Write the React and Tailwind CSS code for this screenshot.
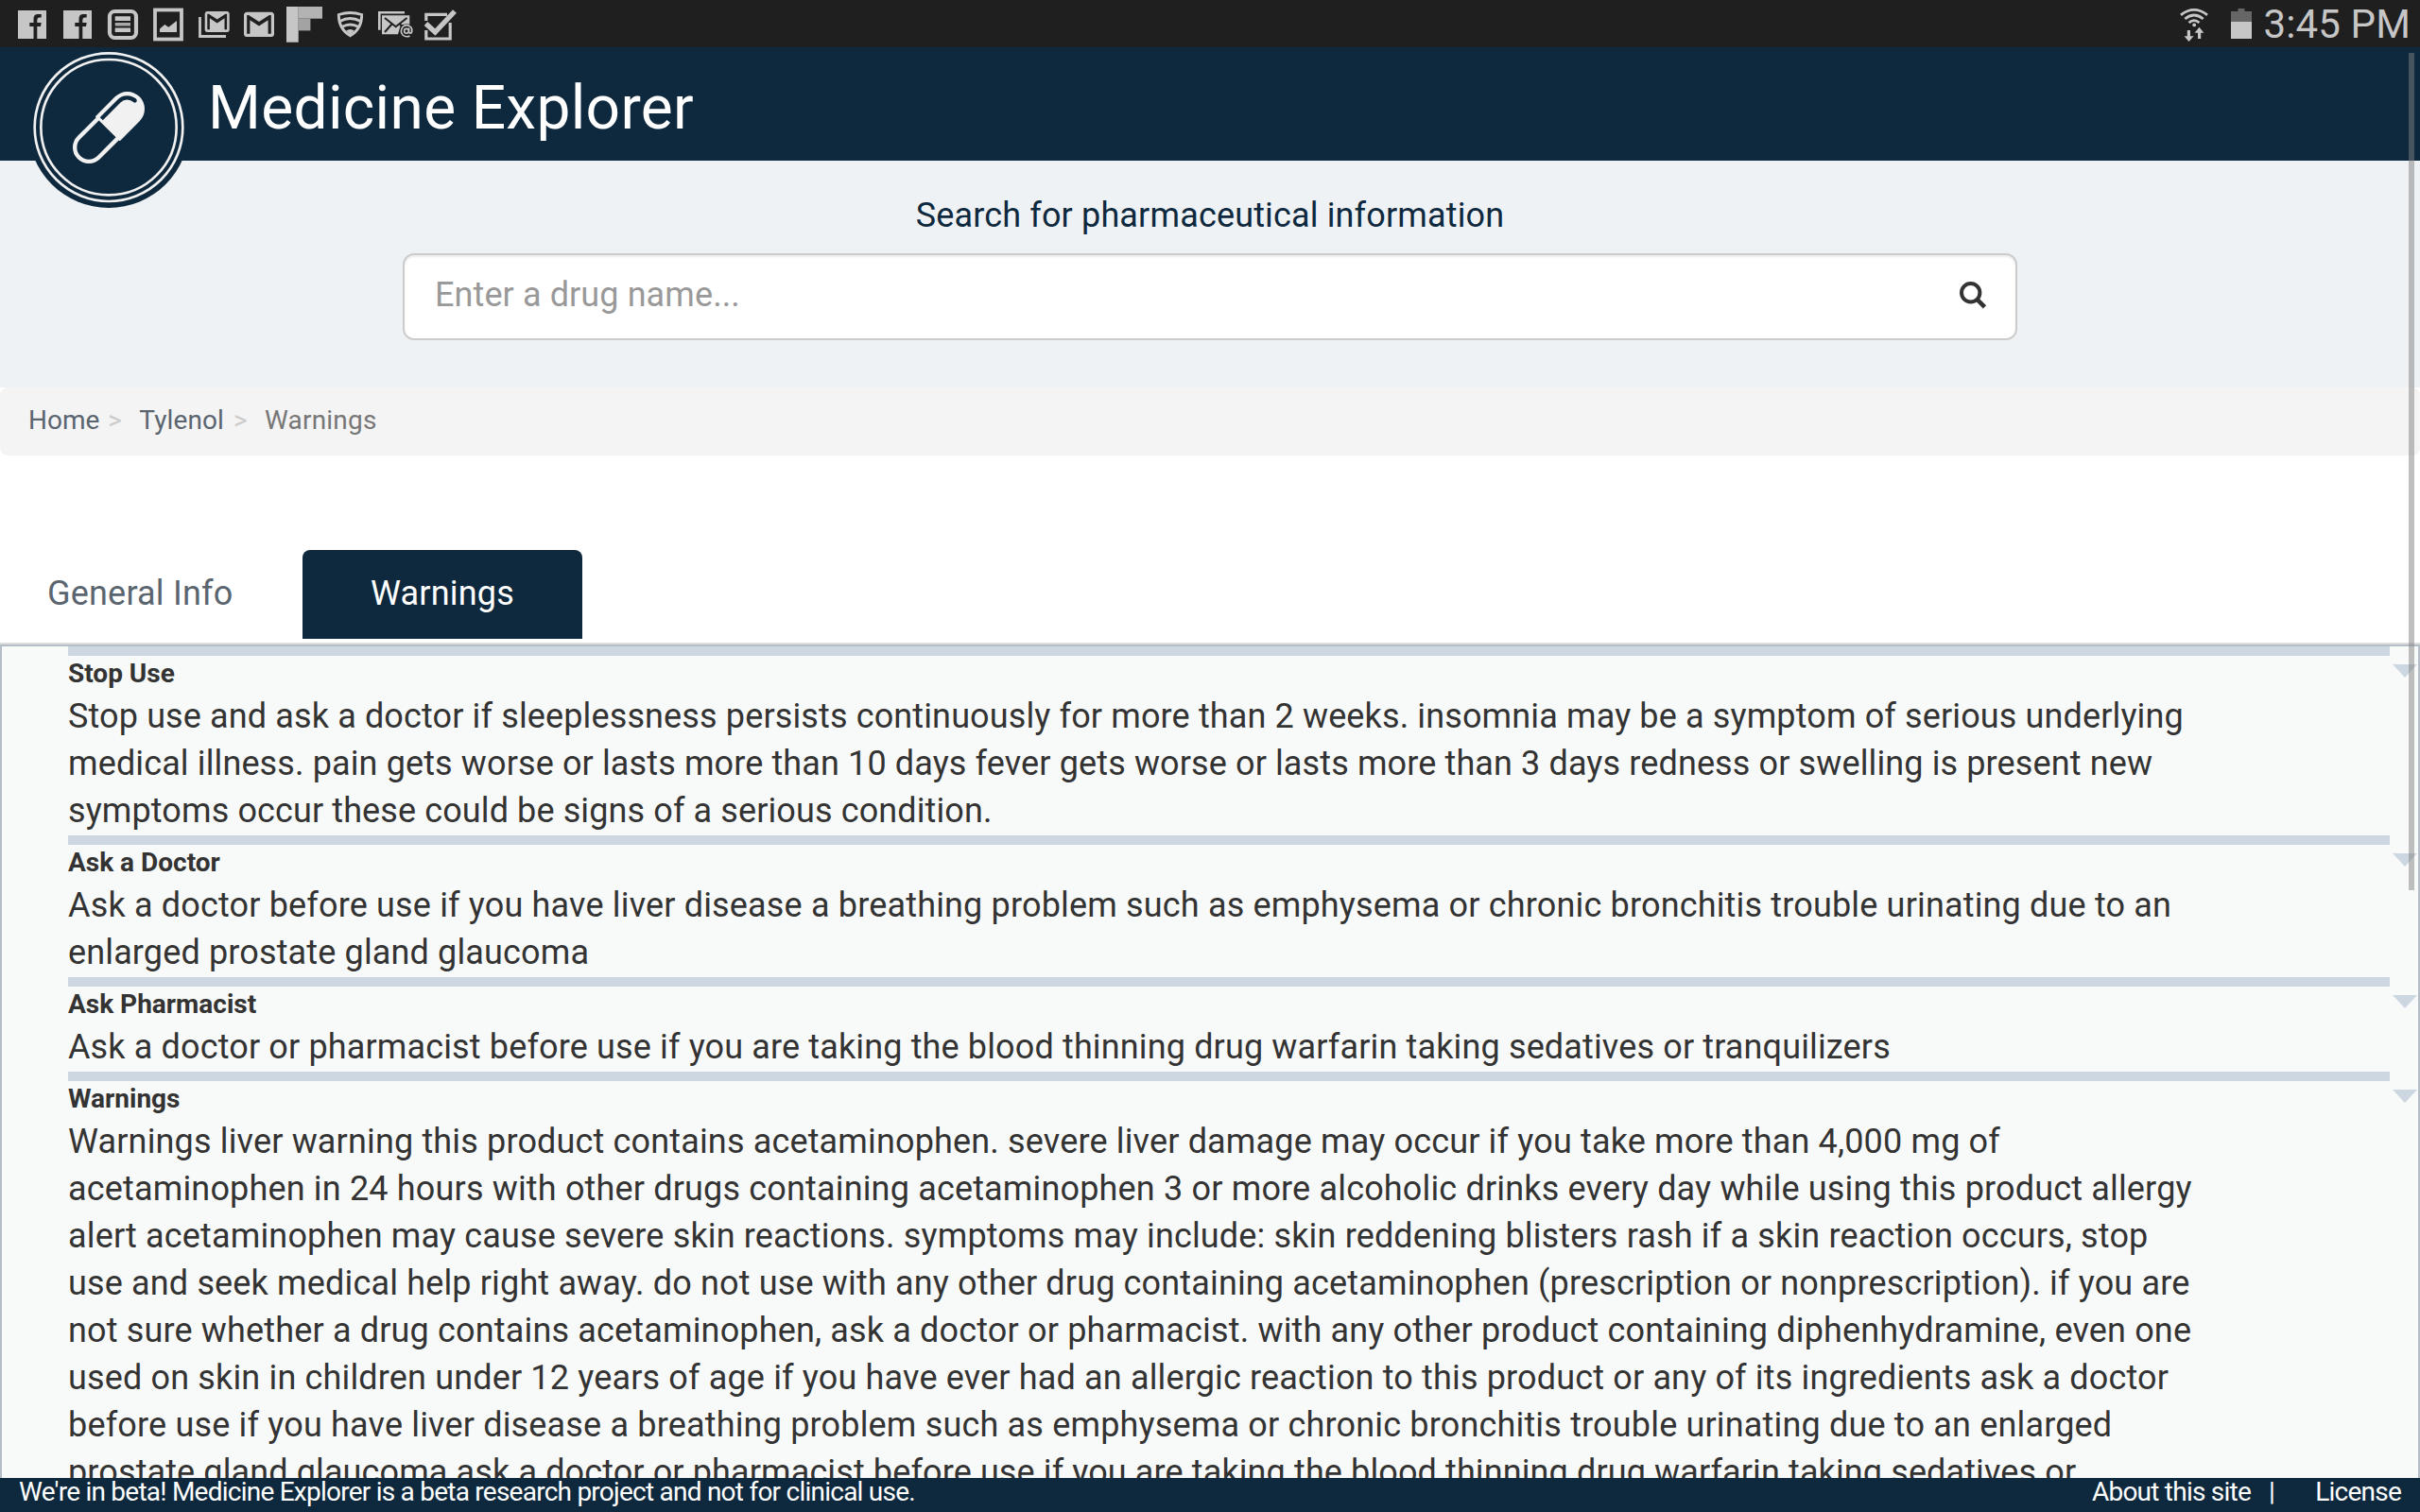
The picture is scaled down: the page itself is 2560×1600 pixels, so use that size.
import React from 'react';

const GMAIL = 'M20,18H18V9.25L12,13L6,9.25V18H4V6H5.2L12,10.25L18.8,6H20M20,4H4C2.89,4 2,4.89 2,6V18A2,2 0 0,0 4,20H20A2,2 0 0,0 22,18V6C22,4.89 21.1,4 20,4Z';

const SECTIONS = [
  {
    title: 'Stop Use',
    lines: [
      ['Stop use and ask a doctor if sleeplessness persists continuously for more than 2 weeks. insomnia may be a symptom of serious underlying', 'tracking-[0.13px]'],
      ['medical illness. pain gets worse or lasts more than 10 days fever gets worse or lasts more than 3 days redness or swelling is present new', 'tracking-[0.12px]'],
      ['symptoms occur these could be signs of a serious condition.', 'tracking-[0.11px]'],
    ],
  },
  {
    title: 'Ask a Doctor',
    lines: [
      ['Ask a doctor before use if you have liver disease a breathing problem such as emphysema or chronic bronchitis trouble urinating due to an', 'tracking-[0.165px]'],
      ['enlarged prostate gland glaucoma', 'tracking-[0.14px]'],
    ],
  },
  {
    title: 'Ask Pharmacist',
    lines: [
      ['Ask a doctor or pharmacist before use if you are taking the blood thinning drug warfarin taking sedatives or tranquilizers', 'tracking-[0.14px]'],
    ],
  },
  {
    title: 'Warnings',
    lines: [
      ['Warnings liver warning this product contains acetaminophen. severe liver damage may occur if you take more than 4,000 mg of', 'tracking-[0.155px]'],
      ['acetaminophen in 24 hours with other drugs containing acetaminophen 3 or more alcoholic drinks every day while using this product allergy', 'tracking-[0.165px]'],
      ['alert acetaminophen may cause severe skin reactions. symptoms may include: skin reddening blisters rash if a skin reaction occurs, stop', 'tracking-[0.15px]'],
      ['use and seek medical help right away. do not use with any other drug containing acetaminophen (prescription or nonprescription). if you are', 'tracking-[0.155px]'],
      ['not sure whether a drug contains acetaminophen, ask a doctor or pharmacist. with any other product containing diphenhydramine, even one', 'tracking-[0.16px]'],
      ['used on skin in children under 12 years of age if you have ever had an allergic reaction to this product or any of its ingredients ask a doctor', 'tracking-[0.155px]'],
      ['before use if you have liver disease a breathing problem such as emphysema or chronic bronchitis trouble urinating due to an enlarged', 'tracking-[0.17px]'],
      ['prostate gland glaucoma ask a doctor or pharmacist before use if you are taking the blood thinning drug warfarin taking sedatives or', 'tracking-[0.115px]'],
    ],
  },
];

function NotificationIcons() {
  return (
    <svg width="500" height="50" viewBox="0 0 500 50" fill="#c6c6c6">
      {[0, 48].map((x) => (
        <path key={x} transform={`translate(${x} 0)`} fillRule="evenodd" d="M19 11H49V41H39.3V28H43L43.7 24H39.3V21Q39.3 18.5 41.5 18.5H43.7V15H40Q35.5 15 35.5 20V24H31.3V28H35.5V41H19Z" />
      ))}
      <rect x="116" y="12" width="28" height="28" rx="5.5" fill="none" stroke="#c6c6c6" strokeWidth="4.2" />
      <path d="M121.7 17.3H138V22H121.7ZM121.7 29.5H138V34H121.7Z" />
      <path d="M121.7 24H138V27.5H121.7Z" fill="#a9a9a9" />
      <rect x="164" y="10.5" width="28" height="31" fill="none" stroke="#c6c6c6" strokeWidth="3.8" />
      <path d="M169 34V30.5L174.3 26L178.3 28.7L187 22V34Z" />
      <path d="M211.5 18V38.5H239" fill="none" stroke="#c6c6c6" strokeWidth="2.8" />
      <path d={GMAIL} transform="translate(214.1 6.5) scale(1.3 1.375)" />
      <path d={GMAIL} transform="translate(254.8 6.1) scale(1.6 1.645)" />
      <rect x="303" y="7" width="12.7" height="37.7" />
      <rect x="315.7" y="7" width="25.3" height="12.7" fill="#b3b3b3" />
      <rect x="315.7" y="19.7" width="12.7" height="12.7" fill="#a3a3a3" />
      <path d="M358.3 15.5Q370.5 11.5 382.7 15.5Q383 30.5 370.5 37.8Q358 30.5 358.3 15.5Z" fill="none" stroke="#c6c6c6" strokeWidth="2.8" />
      <path d="M359.5 22.5Q370.5 16.5 381.5 22.5M362 28.3Q370.5 23.5 379 28.3" fill="none" stroke="#c6c6c6" strokeWidth="3" />
      <path d="M366 32.5Q370.5 29.5 375 32.5L370.5 36.5Z" />
      <path d="M401.3 31.7V13.3H428" fill="none" stroke="#c6c6c6" strokeWidth="2.6" />
      <path d="M404 16.3H433.3V26H424L421 36.3H404Z" />
      <path d="M407 19L418.7 28.3L430.5 19M407 34L414.5 25.5M423 25.5L426 28.5" fill="none" stroke="#1f1f1f" strokeWidth="2" />
      <circle cx="430.3" cy="32.8" r="7.6" fill="#1f1f1f" />
      <circle cx="430" cy="32.8" r="2.4" fill="none" stroke="#c6c6c6" strokeWidth="1.6" />
      <path d="M432.6 29.5V34Q433.4 36 435.4 34.5Q436.6 31 434.5 28.5Q430 24.7 426 28.5Q422.7 33 426 37Q429.5 40 433.5 38" fill="none" stroke="#c6c6c6" strokeWidth="1.6" />
      <path d="M450.8 22V15.3H473M476.2 24V41H450.8V32" fill="none" stroke="#c6c6c6" strokeWidth="3.2" />
      <path d="M450.5 25L460.3 34L481 12" fill="none" stroke="#c6c6c6" strokeWidth="5.4" />
    </svg>
  );
}

function SystemIcons() {
  return (
    <svg width="84" height="50" viewBox="2304 0 84 50" fill="#c6c6c6">
      <g fill="none" stroke="#c6c6c6" strokeWidth="2.8">
        <path d="M2307 15.8Q2321 5 2335 15.8" />
        <path d="M2311.3 20Q2321 12 2330.7 20" />
        <path d="M2315.5 24Q2321 19.2 2326.5 24" />
      </g>
      <circle cx="2321.2" cy="26.4" r="1.9" />
      <path d="M2313.8 32H2317V38.3H2320.6L2315.5 44L2310.6 38.3H2313.8ZM2325 41H2328.2V34.8H2331.4L2326.5 28.8L2321.6 34.8H2325Z" />
      <path d="M2367.5 9H2374.5V12H2382V23H2360V12H2367.5Z" fill="#666" />
      <rect x="2360" y="23" width="22" height="18" />
    </svg>
  );
}

function Logo() {
  return (
    <svg className="block h-[184px] w-[190px]" viewBox="0 0 570 552" fill="none">
      <circle cx="285" cy="272" r="256" fill="#0e293e" />
      <circle cx="285" cy="272" r="235" stroke="#f1f1f1" strokeWidth="8" />
      <circle cx="285" cy="272" r="215" stroke="#f1f1f1" strokeWidth="8" />
      <g transform="translate(283 275) rotate(-45)">
        <path d="M0 -44.5H-86.3A44.5 44.5 0 0 0 -86.3 44.5H0" stroke="#f1f1f1" strokeWidth="13" />
        <path d="M-3 -53Q-3 -55 0 -55H86.3A55 55 0 0 1 86.3 55H0Q-3 55 -3 53Z" fill="#f1f1f1" />
        <path d="M6 -36H86.3A36 36 0 0 1 122 -2" stroke="#0e293e" strokeWidth="13" />
        <circle cx="122" cy="-2" r="6.5" fill="#0e293e" />
      </g>
    </svg>
  );
}

function Section({ title, lines }) {
  return (
    <section className="flex">
      <div className="w-[2456px] border-t-[10px] border-[#cdd7e1]">
        <h2 className="h-10 text-[28px] leading-[38px] font-bold">{title}</h2>
        {lines.map(([text, tracking]) => (
          <p key={text} className={`h-[50px] text-4xl leading-[49px] whitespace-nowrap ${tracking}`}>{text}</p>
        ))}
      </div>
      <svg className="mt-[19px] ml-[3px] block h-[14px] w-[26px]" viewBox="0 0 26 14">
        <path d="M0 0H26L13 14Z" fill="#cdd7e1" />
      </svg>
    </section>
  );
}

export default function App() {
  return (
    <div className="relative flex h-[1600px] w-[2560px] flex-col overflow-hidden bg-white font-['Roboto',sans-serif] text-[#333]">
      <div className="z-20 flex h-[50px] shrink-0 items-center justify-between bg-[#1f1f1f] text-[#c6c6c6]">
        <NotificationIcons />
        <div className="flex items-center">
          <SystemIcons />
          <span className="mr-[10px] ml-[6px] h-[50px] text-[42px] leading-[52px] tracking-[0.15px]">3:45 PM</span>
        </div>
      </div>

      <header className="relative z-10 flex h-[120px] shrink-0 bg-[#0e293e] pl-[220px] text-white">
        <div className="absolute -top-[6px] left-5">
          <Logo />
        </div>
        <h1 className="text-[64px] leading-[129px] tracking-[0.33px]">Medicine Explorer</h1>
      </header>

      <div className="flex h-[240px] shrink-0 flex-col items-center bg-[#eef2f5]">
        <div className="mt-[33px] h-[65px] text-4xl leading-[50px] tracking-[0.15px] text-[#0e293e]">Search for pharmaceutical information</div>
        <div className="flex h-[92px] w-[1708px] items-center justify-between rounded-xl border-2 border-[#ccc] bg-white pr-[30px] pl-[32px] shadow-[inset_0_2px_2px_rgba(0,0,0,0.075)]">
          <span className="mb-1 text-4xl leading-[50px] tracking-[0.1px] text-[#999]">Enter a drug name...</span>
          <svg className="mb-1 h-[30px] w-[30px]" viewBox="0 0 30 30" fill="none" stroke="#333">
            <circle cx="12.7" cy="12.7" r="9.7" strokeWidth="4" />
            <path d="M19.5 19.8L27.5 27.8" strokeWidth="4.6" />
          </svg>
        </div>
      </div>

      <nav className="flex h-[72px] shrink-0 items-center rounded-lg bg-[#f4f4f4] pb-[3px] pl-[30px] text-[28px] leading-[40px]">
        <span className="text-[#5a6570]">Home</span>
        <span className="w-[42px] pl-[9px] text-[#ccc]">&gt;</span>
        <span className="tracking-[0.1px] text-[#5a6570]">Tylenol</span>
        <span className="w-[43px] pl-[10px] text-[#ccc]">&gt;</span>
        <span className="tracking-[0.2px] text-[#777]">Warnings</span>
      </nav>

      <div className="mt-[100px] flex h-[98px] shrink-0 items-start text-4xl leading-[93px] tracking-[0.2px]">
        <span className="w-[320px] pl-[50px] text-[#5a6570]">General Info</span>
        <span className="h-[94px] w-[296px] rounded-t-lg bg-[#0e293e] pl-[72px] text-white">Warnings</span>
      </div>

      <div className="flex min-h-0 flex-1 flex-col border-t-2 border-[#ddd]">
        <main className="min-h-0 flex-1 overflow-hidden border-2 border-b-0 border-[#b5bec6] bg-[#f8faf9] pl-[70px]">
          {SECTIONS.map((s) => (
            <Section key={s.title} {...s} />
          ))}
        </main>
      </div>

      <footer className="flex h-9 shrink-0 justify-between bg-[#0e293e] pl-5 text-[28px] leading-[30px] tracking-[-0.76px] text-white">
        <span>We're in beta! Medicine Explorer is a beta research project and not for clinical use.</span>
        <div className="flex pr-[20px]">
          <span className="mr-[19px]">About this site</span>
          <span className="mr-[43px]">|</span>
          <span>License</span>
        </div>
      </footer>

      <div className="absolute top-[56px] left-[2548px] z-30 h-[886px] w-[6px] bg-[#7f7f7f]/50" />
    </div>
  );
}
